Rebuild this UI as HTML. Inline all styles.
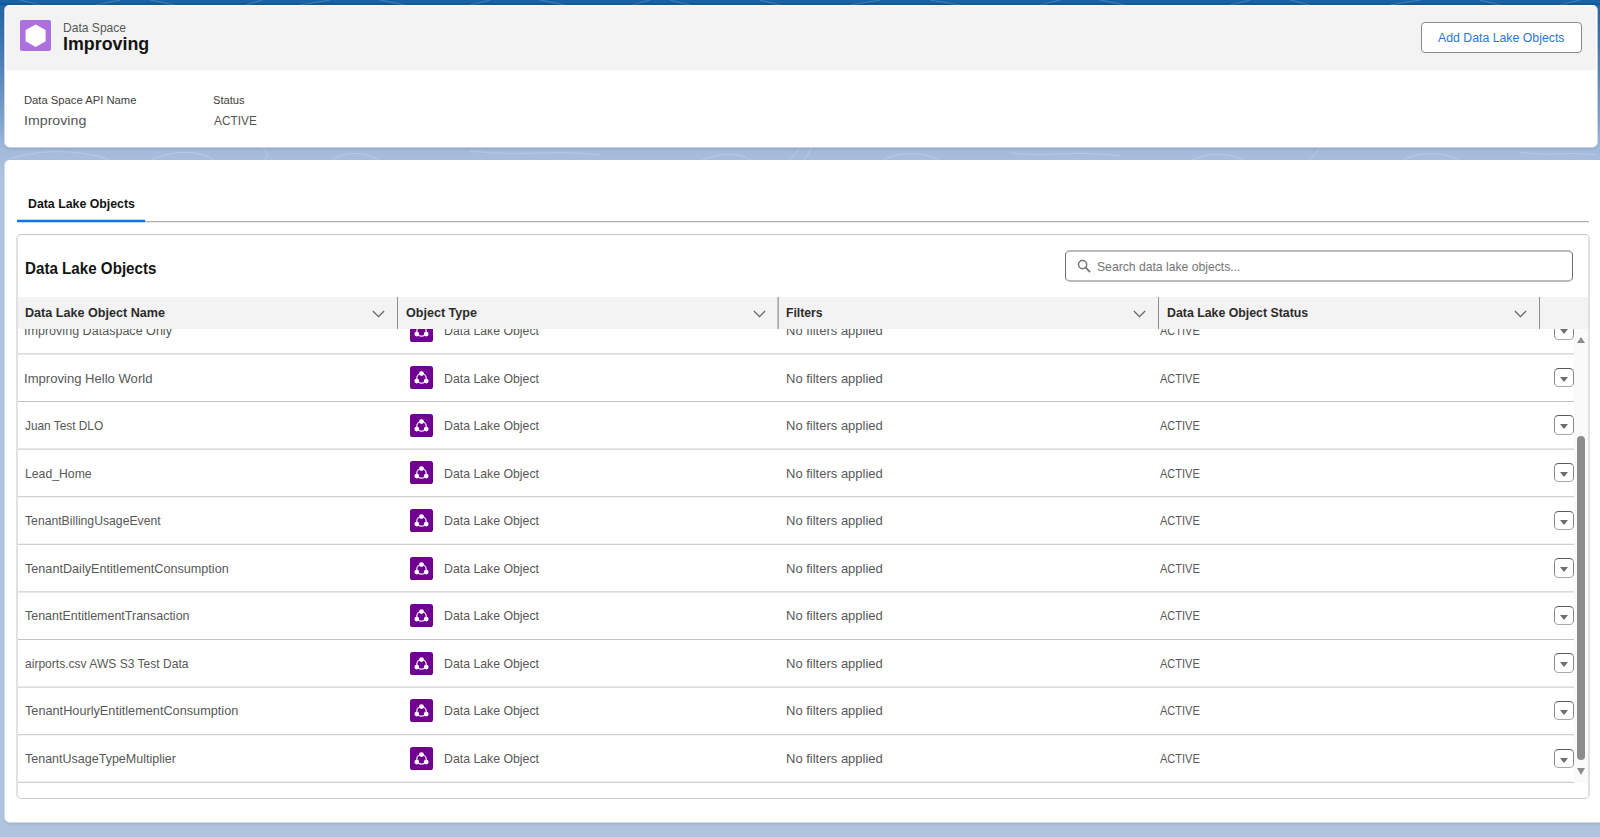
<!DOCTYPE html>
<html lang="en">
<head>
<meta charset="utf-8">
<title>Data Space - Improving</title>
<style>
*{box-sizing:border-box;margin:0;padding:0}
html,body{width:1600px;height:837px;overflow:hidden}
body{position:relative;background:#b0c4df;font-family:"Liberation Sans",Arial,sans-serif;font-size:13px;color:#444}
.abs{position:absolute}
.t{position:absolute;white-space:nowrap;line-height:1;transform-origin:0 0}
#bg{left:0;top:0;width:1600px;height:200px;background:linear-gradient(to bottom,#1c61a1 0,#1c61a1 3px,#0a5aa0 3px,#0a5aa0 5px,#2466a4 5px,#3a74b2 40px,#4b7fb8 60px,#5c8bc0 80px,#6e97c8 100px,#80a3cf 120px,#a2badb 150px,#b0c4df 178px)}
#card1{left:5px;top:5px;width:1592px;height:142px;background:#fff;border-radius:5px;box-shadow:-1px 0 0 rgba(240,236,234,.75),1px 0 0 rgba(255,255,255,.6),0 1px 0 rgba(255,255,255,.5),0 2px 3px rgba(0,0,0,.11)}
#c1head{left:1px;top:1px;width:1590px;height:65px;background:#f3f3f3;border-bottom:1px solid #f9f9f9;border-radius:4px 4px 0 0}
#dsicon{left:15.3px;top:15px;width:30.8px;height:31px;background:#ad70e0;border-radius:2px}
#dsicon svg{position:absolute;left:0;top:0}
#addbtn{left:1416.3px;top:17px;width:160.3px;height:31px;border:1px solid #8a8a8a;border-radius:4px;background:#fff}
#card2{left:5px;top:160px;width:1596px;height:662px;background:#fff;border-radius:5px 2px 0 5px;box-shadow:-1px 0 0 rgba(255,255,255,.5),0 1px 0 rgba(255,255,255,.5),0 2px 3px rgba(0,0,0,.11)}
#tabline{left:17px;top:221px;width:1572px;height:1px;background:#b0b0b0;box-shadow:0 1px 0 rgba(0,0,0,.08)}
#tabul{left:17px;top:220px;width:128px;height:2px;background:#0a77e8;box-shadow:0 -1px 0 rgba(10,119,232,.25),0 1px 0 rgba(10,119,232,.14)}
#tcard{left:16px;top:234px;width:1574px;height:565px;border:1px solid #c6c6c6;border-left:2px solid #e1e1e1;border-right:2px solid #e1e1e1;border-bottom-color:#cbcbcb;border-radius:5px;background:#fff}
#search{left:1065px;top:250px;width:508px;height:32px;border:1px solid #6e6e6e;border-top:2px solid #b9b9b9;border-bottom:2px solid #b9b9b9;border-radius:5px;background:#fff}
#mag{left:1076.8px;top:258.9px;width:14px;height:14px}
#thead{left:18px;top:297px;width:1570px;height:32px;background:#f3f3f3}
.sep{position:absolute;top:297px;width:1px;height:31.5px;background:#8e8e8e}
.chev{position:absolute;top:310px;width:13px;height:8px;overflow:visible}
#rows{left:18px;top:329px;width:1570px;height:454px;overflow:hidden}
.rl{position:absolute;left:0;width:1556px;height:1px;background:#d0d0d0}
.oi{position:absolute;width:23px;height:23px}
.dd{position:absolute;width:20px;height:19.5px;border:1px solid #8a8a8a;border-top-color:#5a5a5a;border-bottom-color:#a8a8a8;border-radius:4.5px;background:#fff}
.dd:after{content:"";position:absolute;left:4.85px;top:8px;border-left:4.15px solid transparent;border-right:4.15px solid transparent;border-top:5.2px solid #6e6e6e}
#sbtrack{left:1574px;top:329px;width:14px;height:454px;background:#fafafa}
#sbthumb{left:1577.3px;top:436px;width:8px;height:324px;background:#8c8c8c;border-radius:4px}
.sbarr{position:absolute;left:1576.7px;width:0;height:0;border-left:4.4px solid transparent;border-right:4.4px solid transparent}

</style>
</head>
<body>
<div id="bg" class="abs"></div>
<svg id="pat2" class="abs" style="left:0;top:0" width="1600" height="5" viewBox="0 0 1600 5" fill="none" stroke="#fff" stroke-opacity=".2" stroke-width="1">
<path d="M20 0 40 5M96 5 120 0M150 0 175 5M246 5 262 0M300 5 330 0M380 0 405 5M470 5 490 0M540 0 565 5M632 5 650 0M670 0 690 5M760 0 780 5M850 5 880 0M930 0 960 5M1040 5 1060 0M1100 0 1125 5M1230 5 1250 0M1290 0 1310 5M1390 5 1420 0M1480 0 1500 5M1560 5 1580 0"/>
</svg>
<svg id="pat" class="abs" style="left:0;top:147px" width="1600" height="14" viewBox="0 0 1600 14" fill="none" stroke="#fff" stroke-opacity=".22" stroke-width="1">
<path d="M10 12C40 2 80 2 110 13M150 14C170 3 200 2 215 14M262 0C270 8 268 12 262 14M330 14C345 4 365 4 380 14M470 4C520 10 560 2 600 8M700 14C720 5 740 5 752 14M800 0L790 14M812 0L804 14M880 14C900 4 925 4 940 14M1010 6C1050 10 1080 3 1120 9M1190 14C1210 5 1230 5 1245 14M1320 0L1310 14M1400 14C1420 4 1445 4 1460 14M1520 5C1550 10 1570 4 1598 8"/>
</svg>

<div id="card1" class="abs">
  <div id="c1head" class="abs"></div>
  <div id="dsicon" class="abs"><svg width="30.8" height="31" viewBox="0 0 30.8 31"><path d="M15.7 4.5 25.6 10V21.3L15.7 27.1 5.6 21.3V10Z" fill="#fff"/></svg></div>
  <div id="addbtn" class="abs"></div>
</div>

<div id="card2" class="abs"></div>
<div id="tabline" class="abs"></div>
<div id="tabul" class="abs"></div>
<div id="tcard" class="abs"></div>
<div id="search" class="abs"></div>
<svg id="mag" class="abs" viewBox="0 0 14 14"><circle cx="5.6" cy="5.6" r="4.1" fill="none" stroke="#747474" stroke-width="1.5"/><path d="M8.7 8.7 12.6 12.6" stroke="#747474" stroke-width="1.7" stroke-linecap="round"/></svg>

<div id="rows" class="abs">
<svg class="oi" style="left:392px;top:-10.40px" viewBox="0 0 23 23"><rect width="23" height="23" rx="2.6" fill="#700090"/><circle cx="11.5" cy="12.4" r="4.7" fill="none" stroke="#fff" stroke-width="1.3" stroke-opacity=".9"/><circle cx="11.5" cy="7.6" r="2.4" fill="#fff"/><circle cx="6.8" cy="15.1" r="2.4" fill="#fff"/><circle cx="16.2" cy="15.1" r="2.4" fill="#fff"/></svg><div class="dd" style="left:1536px;top:-8.90px"></div><div class="rl" style="top:24px;background:#dcdcdc"></div><div class="rl" style="top:25px;background:#e7e7e7"></div>
<svg class="oi" style="left:392px;top:37.20px" viewBox="0 0 23 23"><rect width="23" height="23" rx="2.6" fill="#700090"/><circle cx="11.5" cy="12.4" r="4.7" fill="none" stroke="#fff" stroke-width="1.3" stroke-opacity=".9"/><circle cx="11.5" cy="7.6" r="2.4" fill="#fff"/><circle cx="6.8" cy="15.1" r="2.4" fill="#fff"/><circle cx="16.2" cy="15.1" r="2.4" fill="#fff"/></svg><div class="dd" style="left:1536px;top:38.70px"></div><div class="rl" style="top:72px;background:#c4c4c4"></div>
<svg class="oi" style="left:392px;top:84.80px" viewBox="0 0 23 23"><rect width="23" height="23" rx="2.6" fill="#700090"/><circle cx="11.5" cy="12.4" r="4.7" fill="none" stroke="#fff" stroke-width="1.3" stroke-opacity=".9"/><circle cx="11.5" cy="7.6" r="2.4" fill="#fff"/><circle cx="6.8" cy="15.1" r="2.4" fill="#fff"/><circle cx="16.2" cy="15.1" r="2.4" fill="#fff"/></svg><div class="dd" style="left:1536px;top:86.30px"></div><div class="rl" style="top:119px;background:#e7e7e7"></div><div class="rl" style="top:120px;background:#dcdcdc"></div>
<svg class="oi" style="left:392px;top:132.40px" viewBox="0 0 23 23"><rect width="23" height="23" rx="2.6" fill="#700090"/><circle cx="11.5" cy="12.4" r="4.7" fill="none" stroke="#fff" stroke-width="1.3" stroke-opacity=".9"/><circle cx="11.5" cy="7.6" r="2.4" fill="#fff"/><circle cx="6.8" cy="15.1" r="2.4" fill="#fff"/><circle cx="16.2" cy="15.1" r="2.4" fill="#fff"/></svg><div class="dd" style="left:1536px;top:133.90px"></div><div class="rl" style="top:167px;background:#d0d0d0"></div><div class="rl" style="top:168px;background:#f3f3f3"></div>
<svg class="oi" style="left:392px;top:180.00px" viewBox="0 0 23 23"><rect width="23" height="23" rx="2.6" fill="#700090"/><circle cx="11.5" cy="12.4" r="4.7" fill="none" stroke="#fff" stroke-width="1.3" stroke-opacity=".9"/><circle cx="11.5" cy="7.6" r="2.4" fill="#fff"/><circle cx="6.8" cy="15.1" r="2.4" fill="#fff"/><circle cx="16.2" cy="15.1" r="2.4" fill="#fff"/></svg><div class="dd" style="left:1536px;top:181.50px"></div><div class="rl" style="top:214px;background:#f3f3f3"></div><div class="rl" style="top:215px;background:#d0d0d0"></div>
<svg class="oi" style="left:392px;top:227.60px" viewBox="0 0 23 23"><rect width="23" height="23" rx="2.6" fill="#700090"/><circle cx="11.5" cy="12.4" r="4.7" fill="none" stroke="#fff" stroke-width="1.3" stroke-opacity=".9"/><circle cx="11.5" cy="7.6" r="2.4" fill="#fff"/><circle cx="6.8" cy="15.1" r="2.4" fill="#fff"/><circle cx="16.2" cy="15.1" r="2.4" fill="#fff"/></svg><div class="dd" style="left:1536px;top:229.10px"></div><div class="rl" style="top:262px;background:#dcdcdc"></div><div class="rl" style="top:263px;background:#e7e7e7"></div>
<svg class="oi" style="left:392px;top:275.20px" viewBox="0 0 23 23"><rect width="23" height="23" rx="2.6" fill="#700090"/><circle cx="11.5" cy="12.4" r="4.7" fill="none" stroke="#fff" stroke-width="1.3" stroke-opacity=".9"/><circle cx="11.5" cy="7.6" r="2.4" fill="#fff"/><circle cx="6.8" cy="15.1" r="2.4" fill="#fff"/><circle cx="16.2" cy="15.1" r="2.4" fill="#fff"/></svg><div class="dd" style="left:1536px;top:276.70px"></div><div class="rl" style="top:310px;background:#c4c4c4"></div>
<svg class="oi" style="left:392px;top:322.80px" viewBox="0 0 23 23"><rect width="23" height="23" rx="2.6" fill="#700090"/><circle cx="11.5" cy="12.4" r="4.7" fill="none" stroke="#fff" stroke-width="1.3" stroke-opacity=".9"/><circle cx="11.5" cy="7.6" r="2.4" fill="#fff"/><circle cx="6.8" cy="15.1" r="2.4" fill="#fff"/><circle cx="16.2" cy="15.1" r="2.4" fill="#fff"/></svg><div class="dd" style="left:1536px;top:324.30px"></div><div class="rl" style="top:357px;background:#e7e7e7"></div><div class="rl" style="top:358px;background:#dcdcdc"></div>
<svg class="oi" style="left:392px;top:370.40px" viewBox="0 0 23 23"><rect width="23" height="23" rx="2.6" fill="#700090"/><circle cx="11.5" cy="12.4" r="4.7" fill="none" stroke="#fff" stroke-width="1.3" stroke-opacity=".9"/><circle cx="11.5" cy="7.6" r="2.4" fill="#fff"/><circle cx="6.8" cy="15.1" r="2.4" fill="#fff"/><circle cx="16.2" cy="15.1" r="2.4" fill="#fff"/></svg><div class="dd" style="left:1536px;top:371.90px"></div><div class="rl" style="top:405px;background:#d0d0d0"></div><div class="rl" style="top:406px;background:#f3f3f3"></div>
<svg class="oi" style="left:392px;top:418.00px" viewBox="0 0 23 23"><rect width="23" height="23" rx="2.6" fill="#700090"/><circle cx="11.5" cy="12.4" r="4.7" fill="none" stroke="#fff" stroke-width="1.3" stroke-opacity=".9"/><circle cx="11.5" cy="7.6" r="2.4" fill="#fff"/><circle cx="6.8" cy="15.1" r="2.4" fill="#fff"/><circle cx="16.2" cy="15.1" r="2.4" fill="#fff"/></svg><div class="dd" style="left:1536px;top:419.50px"></div><div class="rl" style="top:452px;background:#f3f3f3"></div><div class="rl" style="top:453px;background:#d0d0d0"></div>

<div class="t" style="left:6.26px;top:-4.00px;font-size:12.7px;font-weight:400;color:#585858;transform:scaleX(0.9895)">Improving Dataspace Only</div>
<div class="t" style="left:426.23px;top:-4.00px;font-size:12.7px;font-weight:400;color:#585858;transform:scaleX(0.9691)">Data Lake Object</div>
<div class="t" style="left:767.68px;top:-4.00px;font-size:12.7px;font-weight:400;color:#585858;transform:scaleX(1.0243)">No filters applied</div>
<div class="t" style="left:1141.50px;top:-4.00px;font-size:12.7px;font-weight:400;color:#585858;transform:scaleX(0.8685)">ACTIVE</div>
<div class="t" style="left:6.21px;top:44.00px;font-size:12.7px;font-weight:400;color:#585858;transform:scaleX(1.0310)">Improving Hello World</div>
<div class="t" style="left:426.23px;top:44.00px;font-size:12.7px;font-weight:400;color:#585858;transform:scaleX(0.9691)">Data Lake Object</div>
<div class="t" style="left:767.68px;top:44.00px;font-size:12.7px;font-weight:400;color:#585858;transform:scaleX(1.0243)">No filters applied</div>
<div class="t" style="left:1141.50px;top:44.00px;font-size:12.7px;font-weight:400;color:#585858;transform:scaleX(0.8685)">ACTIVE</div>
<div class="t" style="left:7.27px;top:91.00px;font-size:12.7px;font-weight:400;color:#585858;transform:scaleX(0.9341)">Juan Test DLO</div>
<div class="t" style="left:426.23px;top:91.00px;font-size:12.7px;font-weight:400;color:#585858;transform:scaleX(0.9691)">Data Lake Object</div>
<div class="t" style="left:767.68px;top:91.00px;font-size:12.7px;font-weight:400;color:#585858;transform:scaleX(1.0243)">No filters applied</div>
<div class="t" style="left:1141.50px;top:91.00px;font-size:12.7px;font-weight:400;color:#585858;transform:scaleX(0.8685)">ACTIVE</div>
<div class="t" style="left:6.54px;top:139.00px;font-size:12.7px;font-weight:400;color:#585858;transform:scaleX(0.9644)">Lead_Home</div>
<div class="t" style="left:426.23px;top:139.00px;font-size:12.7px;font-weight:400;color:#585858;transform:scaleX(0.9691)">Data Lake Object</div>
<div class="t" style="left:767.68px;top:139.00px;font-size:12.7px;font-weight:400;color:#585858;transform:scaleX(1.0243)">No filters applied</div>
<div class="t" style="left:1141.50px;top:139.00px;font-size:12.7px;font-weight:400;color:#585858;transform:scaleX(0.8685)">ACTIVE</div>
<div class="t" style="left:7.26px;top:186.00px;font-size:12.7px;font-weight:400;color:#585858;transform:scaleX(0.9613)">TenantBillingUsageEvent</div>
<div class="t" style="left:426.23px;top:186.00px;font-size:12.7px;font-weight:400;color:#585858;transform:scaleX(0.9691)">Data Lake Object</div>
<div class="t" style="left:767.68px;top:186.00px;font-size:12.7px;font-weight:400;color:#585858;transform:scaleX(1.0243)">No filters applied</div>
<div class="t" style="left:1141.50px;top:186.00px;font-size:12.7px;font-weight:400;color:#585858;transform:scaleX(0.8685)">ACTIVE</div>
<div class="t" style="left:7.25px;top:234.00px;font-size:12.7px;font-weight:400;color:#585858;transform:scaleX(0.9961)">TenantDailyEntitlementConsumption</div>
<div class="t" style="left:426.23px;top:234.00px;font-size:12.7px;font-weight:400;color:#585858;transform:scaleX(0.9691)">Data Lake Object</div>
<div class="t" style="left:767.68px;top:234.00px;font-size:12.7px;font-weight:400;color:#585858;transform:scaleX(1.0243)">No filters applied</div>
<div class="t" style="left:1141.50px;top:234.00px;font-size:12.7px;font-weight:400;color:#585858;transform:scaleX(0.8685)">ACTIVE</div>
<div class="t" style="left:7.25px;top:281.00px;font-size:12.7px;font-weight:400;color:#585858;transform:scaleX(0.9829)">TenantEntitlementTransaction</div>
<div class="t" style="left:426.23px;top:281.00px;font-size:12.7px;font-weight:400;color:#585858;transform:scaleX(0.9691)">Data Lake Object</div>
<div class="t" style="left:767.68px;top:281.00px;font-size:12.7px;font-weight:400;color:#585858;transform:scaleX(1.0243)">No filters applied</div>
<div class="t" style="left:1141.50px;top:281.00px;font-size:12.7px;font-weight:400;color:#585858;transform:scaleX(0.8685)">ACTIVE</div>
<div class="t" style="left:7.03px;top:329.00px;font-size:12.7px;font-weight:400;color:#585858;transform:scaleX(0.9499)">airports.csv AWS S3 Test Data</div>
<div class="t" style="left:426.23px;top:329.00px;font-size:12.7px;font-weight:400;color:#585858;transform:scaleX(0.9691)">Data Lake Object</div>
<div class="t" style="left:767.68px;top:329.00px;font-size:12.7px;font-weight:400;color:#585858;transform:scaleX(1.0243)">No filters applied</div>
<div class="t" style="left:1141.50px;top:329.00px;font-size:12.7px;font-weight:400;color:#585858;transform:scaleX(0.8685)">ACTIVE</div>
<div class="t" style="left:7.25px;top:376.00px;font-size:12.7px;font-weight:400;color:#585858;transform:scaleX(1.0014)">TenantHourlyEntitlementConsumption</div>
<div class="t" style="left:426.23px;top:376.00px;font-size:12.7px;font-weight:400;color:#585858;transform:scaleX(0.9691)">Data Lake Object</div>
<div class="t" style="left:767.68px;top:376.00px;font-size:12.7px;font-weight:400;color:#585858;transform:scaleX(1.0243)">No filters applied</div>
<div class="t" style="left:1141.50px;top:376.00px;font-size:12.7px;font-weight:400;color:#585858;transform:scaleX(0.8685)">ACTIVE</div>
<div class="t" style="left:7.25px;top:424.00px;font-size:12.7px;font-weight:400;color:#585858;transform:scaleX(0.9856)">TenantUsageTypeMultiplier</div>
<div class="t" style="left:426.23px;top:424.00px;font-size:12.7px;font-weight:400;color:#585858;transform:scaleX(0.9691)">Data Lake Object</div>
<div class="t" style="left:767.68px;top:424.00px;font-size:12.7px;font-weight:400;color:#585858;transform:scaleX(1.0243)">No filters applied</div>
<div class="t" style="left:1141.50px;top:424.00px;font-size:12.7px;font-weight:400;color:#585858;transform:scaleX(0.8685)">ACTIVE</div>
</div>
<div id="sbtrack" class="abs"></div>
<div id="sbthumb" class="abs"></div>
<div class="sbarr" style="top:337px;border-bottom:6.6px solid #8c8c8c"></div>
<div class="sbarr" style="top:768px;border-top:7px solid #8c8c8c"></div>

<div id="thead" class="abs"></div>
<div class="sep" style="left:397px"></div><div class="sep" style="left:1158px"></div><div class="sep" style="left:1539px"></div><div class="sep" style="left:777px;background:#c4c4c4"></div><div class="sep" style="left:778px;background:#a8a8a8"></div>
<svg class="chev" style="left:372px" viewBox="0 0 13 8"><path d="M0.9 1 6.5 6.6 12.1 1" fill="none" stroke="#666" stroke-width="1.3"/></svg><svg class="chev" style="left:752.5px" viewBox="0 0 13 8"><path d="M0.9 1 6.5 6.6 12.1 1" fill="none" stroke="#666" stroke-width="1.3"/></svg><svg class="chev" style="left:1133px" viewBox="0 0 13 8"><path d="M0.9 1 6.5 6.6 12.1 1" fill="none" stroke="#666" stroke-width="1.3"/></svg><svg class="chev" style="left:1514px" viewBox="0 0 13 8"><path d="M0.9 1 6.5 6.6 12.1 1" fill="none" stroke="#666" stroke-width="1.3"/></svg>
<div class="t" style="left:62.65px;top:22.00px;font-size:12.7px;font-weight:400;color:#585858;transform:scaleX(0.9514)">Data Space</div>
<div class="t" style="left:62.73px;top:36.00px;font-size:17.5px;font-weight:700;color:#141414;transform:scaleX(1.0188)">Improving</div>
<div class="t" style="left:1437.70px;top:32.00px;font-size:12.7px;font-weight:400;color:#2b78d8;transform:scaleX(0.9692)">Add Data Lake Objects</div>
<div class="t" style="left:24.14px;top:94.00px;font-size:11.7px;font-weight:400;color:#3e3e3c;transform:scaleX(0.9610)">Data Space API Name</div>
<div class="t" style="left:213.32px;top:94.00px;font-size:11.7px;font-weight:400;color:#3e3e3c;transform:scaleX(0.9550)">Status</div>
<div class="t" style="left:23.80px;top:114.00px;font-size:13.7px;font-weight:400;color:#555;transform:scaleX(1.0362)">Improving</div>
<div class="t" style="left:213.80px;top:114.00px;font-size:13.7px;font-weight:400;color:#555;transform:scaleX(0.8656)">ACTIVE</div>
<div class="t" style="left:27.87px;top:198.00px;font-size:12.7px;font-weight:700;color:#141414;transform:scaleX(0.9720)">Data Lake Objects</div>
<div class="t" style="left:24.83px;top:261.00px;font-size:15.6px;font-weight:700;color:#141414;transform:scaleX(0.9723)">Data Lake Objects</div>
<div class="t" style="left:1096.88px;top:261.00px;font-size:12.7px;font-weight:400;color:#757575;transform:scaleX(0.9591)">Search data lake objects...</div>
<div class="t" style="left:24.76px;top:307.00px;font-size:12.7px;font-weight:700;color:#2b2b2b;transform:scaleX(0.9921)">Data Lake Object Name</div>
<div class="t" style="left:405.91px;top:307.00px;font-size:12.7px;font-weight:700;color:#2b2b2b;transform:scaleX(0.9894)">Object Type</div>
<div class="t" style="left:786.38px;top:307.00px;font-size:12.7px;font-weight:700;color:#2b2b2b;transform:scaleX(0.9605)">Filters</div>
<div class="t" style="left:1166.87px;top:307.00px;font-size:12.7px;font-weight:700;color:#2b2b2b;transform:scaleX(0.9722)">Data Lake Object Status</div>
</body>
</html>
